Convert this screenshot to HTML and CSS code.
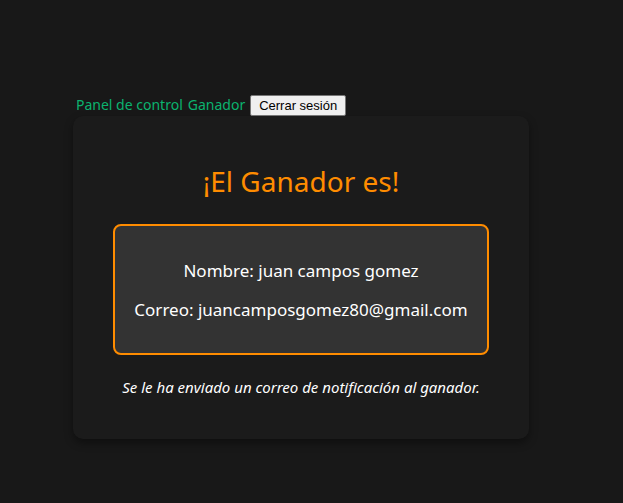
FILE: index.html
```html
<!DOCTYPE html>
<html lang="es">
<head>
<meta charset="utf-8">
<title>Ganador</title>
<link rel="stylesheet" href="styles.css">
</head>
<body>
<main class="page">
  <nav class="menu">
    <a class="menu-link" href="#panel">Panel de control</a>
    <a class="menu-link" href="#ganador">Ganador</a>
    <button class="logout" type="button">Cerrar sesión</button>
  </nav>
  <section class="card">
    <h1 class="title">¡El Ganador es!</h1>
    <div class="winner">
      <p class="detail">Nombre: juan campos gomez</p>
      <p class="detail">Correo: juancamposgomez80@gmail.com</p>
    </div>
    <p class="notice">Se le ha enviado un correo de notificación al ganador.</p>
  </section>
</main>
</body>
</html>
```
FILE: styles.css
```css
* {
  box-sizing: border-box;
}

body {
  margin: 0;
  min-height: 100vh;
  padding: 30px 21px 0 0;
  display: flex;
  align-items: center;
  justify-content: center;
  background: #181818;
  color: #fff;
  font-family: "Segoe UI", "Noto Sans", "Open Sans", sans-serif;
  font-size: 15px;
}

.page {
  width: 100%;
  max-width: 456px;
}

.menu {
  display: flex;
  align-items: flex-start;
  gap: 5px;
  padding-left: 3px;
}

.menu-link {
  color: #0bb36f;
  font-size: 14px;
  line-height: 20px;
  text-decoration: none;
}

.logout {
  height: 21px;
  padding: 1px 8px;
  border: 1px solid #767676;
  border-radius: 2px;
  background: #efefef;
  color: #000;
  font: 13px "Liberation Sans", Arial, sans-serif;
}

.card {
  padding: 40px;
  border-radius: 10px;
  background: #1b1b1b;
  box-shadow: 0 4px 8px rgba(0, 0, 0, 0.4);
  text-align: center;
}

.title {
  margin: 4px 0 22px;
  color: #ff8c00;
  font-size: 28px;
  font-weight: 400;
  line-height: 42px;
}

.winner {
  padding: 25px 16px 24px;
  border: 2px solid #ff8c00;
  border-radius: 8px;
  background: #333;
}

.detail {
  margin: 0;
  font-size: 17px;
  line-height: 39px;
}

.notice {
  margin: 20px 0 0;
  font-style: italic;
  line-height: 24px;
}
```
